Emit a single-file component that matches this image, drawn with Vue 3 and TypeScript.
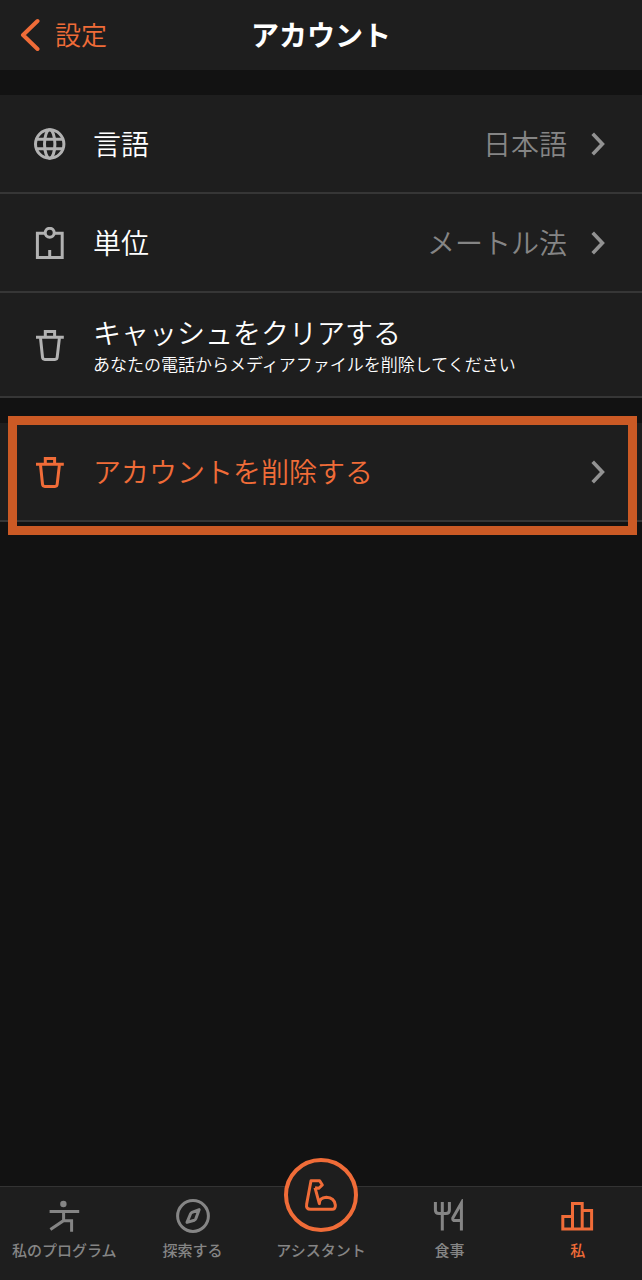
<script setup lang="ts">
interface Setting {
  id: string
  icon: 'globe' | 'unit' | 'trash'
  title: string
  note?: string
  value?: string
  arrow: boolean
  danger?: boolean
}

interface Tab {
  id: 'program' | 'explore' | 'assistant' | 'meal' | 'me'
  label: string
}

const groups: Setting[][] = [
  [
    { id: 'language', icon: 'globe', title: '言語', value: '日本語', arrow: true },
    { id: 'units', icon: 'unit', title: '単位', value: 'メートル法', arrow: true },
    {
      id: 'cache',
      icon: 'trash',
      title: 'キャッシュをクリアする',
      note: 'あなたの電話からメディアファイルを削除してください',
      arrow: false,
    },
  ],
  [{ id: 'delete', icon: 'trash', title: 'アカウントを削除する', arrow: true, danger: true }],
]

const tabs: Tab[] = [
  { id: 'program', label: '私のプログラム' },
  { id: 'explore', label: '探索する' },
  { id: 'assistant', label: 'アシスタント' },
  { id: 'meal', label: '食事' },
  { id: 'me', label: '私' },
]
</script>

<template>
  <div class="screen">
    <header class="header">
      <button class="back" type="button">
        <svg class="back-icon" viewBox="0 0 20 34" aria-hidden="true">
          <path d="M17.5 3 L3 17 L17.5 31" />
        </svg>
        <span class="back-label">設定</span>
      </button>
      <h1 class="title">アカウント</h1>
    </header>

    <main class="content">
      <section v-for="(group, index) in groups" :key="index" class="group">
        <button
          v-for="item in group"
          :key="item.id"
          type="button"
          class="row"
          :class="{ danger: item.danger, tall: item.note }"
        >
          <svg v-if="item.icon === 'globe'" class="row-icon" viewBox="0 0 32 32" aria-hidden="true">
            <circle cx="15.7" cy="16" r="14.2" />
            <ellipse cx="15.7" cy="16" rx="5.2" ry="14.2" />
            <path d="M2.5 11.3 H29 M2.5 20.7 H29" />
          </svg>
          <svg v-else-if="item.icon === 'unit'" class="row-icon" viewBox="0 0 32 32" aria-hidden="true">
            <path d="M11 6.2 H3.4 V30.6 H28.2 V6.2 H20.4 M15.7 30 V23" />
            <circle cx="15.7" cy="5.8" r="4.5" />
          </svg>
          <svg v-else class="row-icon" viewBox="0 0 32 32" aria-hidden="true">
            <path d="M2 8.2 H29.8 M11.3 8 V2.4 H20.6 V8" />
            <path d="M6.5 9 L8.5 28.2 Q8.7 30.4 10.8 30.4 H21 Q23 30.4 23.2 28.2 L25.4 9" />
          </svg>
          <span class="row-text">
            <span class="row-title">{{ item.title }}</span>
            <span v-if="item.note" class="row-note">{{ item.note }}</span>
          </span>
          <span v-if="item.value" class="row-value">{{ item.value }}</span>
          <svg v-if="item.arrow" class="arrow" viewBox="0 0 14 24" aria-hidden="true">
            <path d="M1.7 1.8 L11.4 12 L1.7 22.2" />
          </svg>
        </button>
      </section>
    </main>

    <nav class="tabs">
      <button
        v-for="tab in tabs"
        :key="tab.id"
        type="button"
        class="tab"
        :class="{ active: tab.id === 'me' }"
      >
        <span v-if="tab.id === 'assistant'" class="circle">
          <svg class="tab-icon" viewBox="192 83 102 102" aria-hidden="true">
            <path
              class="arm"
              d="M225 112 L238 160 Q238 142 259 141 Q283 142 286 164 Q287 177 276 177 H212 Q197 177 200 161 L213 91 H239 L247 104 L236 114 L225 112"
            />
          </svg>
        </span>
        <svg v-else class="tab-icon" viewBox="0 0 34 34" aria-hidden="true">
          <template v-if="tab.id === 'program'">
            <circle class="solid" cx="16.4" cy="5" r="3.2" />
            <path d="M2.6 12.6 H32.2 M16.6 12.6 V21.6 L3.4 30.4 M16.6 21.8 H24.6 V32.8" />
          </template>
          <template v-else-if="tab.id === 'explore'">
            <circle cx="17" cy="17" r="15.4" />
            <path
              class="needle"
              d="M23.2 10.6 L16 13.4 Q15 13.8 14.6 14.8 L11 23.4 L18.4 21.2 Q19.4 20.8 19.8 19.8 Z"
            />
          </template>
          <template v-else-if="tab.id === 'meal'">
            <path d="M3.4 3 V11 Q3.4 14.6 7 14.6 H14 Q17.4 14.6 17.4 11 V3 M10.3 3 V31.4" />
            <path d="M29.4 31.4 V4 L20.8 19 Q20.4 21.6 23 21.6 H29.4" />
          </template>
          <template v-else>
            <path d="M11.5 17.4 H1.8 V30 H30.6 V11.6 H21.4 M11.5 30 V4.6 H21.2 V30" />
          </template>
        </svg>
        <span class="tab-label">{{ tab.label }}</span>
      </button>
    </nav>
  </div>
</template>

<style>
body {
  margin: 0;
  background: #121212;
}
</style>

<style scoped>
.screen {
  display: flex;
  flex-direction: column;
  min-height: 100vh;
  background: #121212;
  color: #fff;
  font-family: 'Noto Sans CJK JP', sans-serif;
}

button {
  margin: 0;
  border: 0;
  background: none;
  color: inherit;
  font: inherit;
  cursor: pointer;
}

svg {
  flex: none;
  fill: none;
  stroke: currentColor;
  stroke-width: 3;
}

.header {
  display: grid;
  grid-template-columns: 1fr auto 1fr;
  align-items: center;
  height: 70px;
  padding: 0 20px;
  background: #1e1e1e;
}

.back {
  display: flex;
  align-items: center;
  gap: 15px;
  justify-self: start;
  padding: 0;
  color: #f06c38;
  font-size: 26px;
  font-weight: 350;
  line-height: 40px;
}

.back-icon {
  width: 20px;
  height: 34px;
  stroke-width: 4;
  stroke-linecap: round;
  stroke-linejoin: round;
}

.title {
  margin: 0;
  font-size: 28px;
  font-weight: 700;
  line-height: 40px;
}

.title,
.back-label,
.row-text,
.row-value {
  padding-bottom: 2px;
}

.content {
  flex: 1;
}

.group {
  margin-top: 25px;
}

.row {
  position: relative;
  display: flex;
  align-items: center;
  box-sizing: border-box;
  width: 100%;
  height: 99px;
  padding: 0 37px 0 34px;
  border-bottom: 2px solid #363636;
  background: #1e1e1e;
  text-align: left;
  font-size: 28px;
  font-weight: 350;
  line-height: 40px;
}

.row.tall {
  height: 105px;
}

.row-icon {
  width: 32px;
  height: 32px;
  margin-right: 27px;
  color: #b2b2b2;
}

.row-text {
  display: flex;
  flex: 1;
  flex-direction: column;
}

.row-note {
  font-size: 17px;
  line-height: 24px;
}

.row-value {
  color: #858585;
}

.arrow {
  width: 14px;
  height: 24px;
  margin-left: 24px;
  color: #929292;
  stroke-width: 3.6;
}

.danger,
.danger .row-icon {
  color: #f06c38;
}

/* Frame drawn around the destructive action */
.danger::after {
  content: '';
  position: absolute;
  inset: -7px 5px -15px 8px;
  border: 9px solid #cb5a25;
}

.tabs {
  display: grid;
  grid-template-columns: repeat(5, 1fr);
  box-sizing: border-box;
  height: 94px;
  border-top: 1px solid #333;
  background: #1e1e1e;
}

.tab {
  display: flex;
  flex-direction: column;
  align-items: center;
  justify-content: flex-end;
  gap: 7px;
  min-width: 0;
  padding: 0 0 20px;
  color: #858585;
  font-size: 15px;
  font-weight: 500;
  line-height: 20px;
  white-space: nowrap;
}

.tab.active {
  color: #f06c38;
}

.tab-icon {
  width: 34px;
  height: 34px;
}

.solid {
  fill: currentColor;
  stroke: none;
}

.needle {
  stroke-linejoin: round;
}

.circle {
  display: flex;
  flex: none;
  align-items: center;
  justify-content: center;
  box-sizing: border-box;
  width: 74px;
  height: 74px;
  margin: -30px 0 1px;
  border: 4px solid #f06c38;
  border-radius: 50%;
  background: #1e1e1e;
  color: #f06c38;
}

.arm {
  stroke-width: 9;
  stroke-linejoin: round;
}
</style>
